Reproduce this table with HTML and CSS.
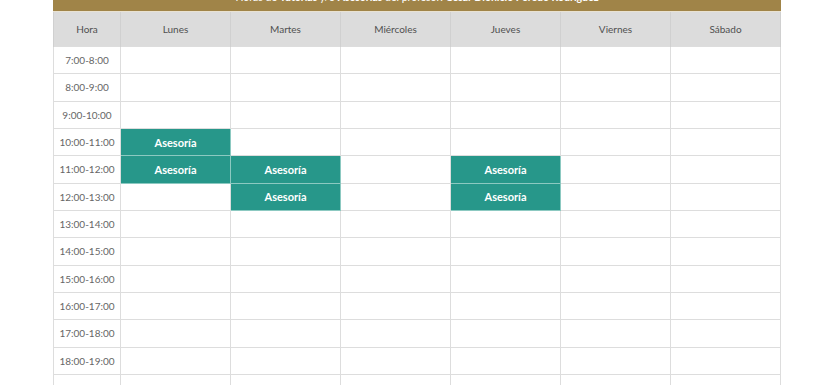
FILE: index.html
```html
<!DOCTYPE html>
<html lang="es">
<head>
<meta charset="utf-8">
<link rel="stylesheet" href="styles.css">
</head>
<body>
<div class="wrap">
  <div class="title">Horas de <b>Tutorías</b> y/o <b>Asesorías</b> del profesor: <b>César Dionicio Peredo Rodríguez</b></div>
  <table class="sched">
    <colgroup><col class="c-hora"><col><col><col><col><col><col></colgroup>
    <thead>
      <tr><th>Hora</th><th>Lunes</th><th>Martes</th><th>Miércoles</th><th>Jueves</th><th>Viernes</th><th>Sábado</th></tr>
    </thead>
    <tbody>
      <tr><td class="t">7:00-8:00</td><td></td><td></td><td></td><td></td><td></td><td></td></tr>
      <tr><td class="t">8:00-9:00</td><td></td><td></td><td></td><td></td><td></td><td></td></tr>
      <tr><td class="t">9:00-10:00</td><td></td><td></td><td></td><td></td><td></td><td></td></tr>
      <tr><td class="t">10:00-11:00</td><td class="on">Asesoría</td><td></td><td></td><td></td><td></td><td></td></tr>
      <tr><td class="t">11:00-12:00</td><td class="on">Asesoría</td><td class="on">Asesoría</td><td></td><td class="on">Asesoría</td><td></td><td></td></tr>
      <tr><td class="t">12:00-13:00</td><td></td><td class="on">Asesoría</td><td></td><td class="on">Asesoría</td><td></td><td></td></tr>
      <tr><td class="t">13:00-14:00</td><td></td><td></td><td></td><td></td><td></td><td></td></tr>
      <tr><td class="t">14:00-15:00</td><td></td><td></td><td></td><td></td><td></td><td></td></tr>
      <tr><td class="t">15:00-16:00</td><td></td><td></td><td></td><td></td><td></td><td></td></tr>
      <tr><td class="t">16:00-17:00</td><td></td><td></td><td></td><td></td><td></td><td></td></tr>
      <tr><td class="t">17:00-18:00</td><td></td><td></td><td></td><td></td><td></td><td></td></tr>
      <tr><td class="t">18:00-19:00</td><td></td><td></td><td></td><td></td><td></td><td></td></tr>
      <tr><td class="t">19:00-20:00</td><td></td><td></td><td></td><td></td><td></td><td></td></tr>
    </tbody>
  </table>
</div>
</body>
</html>
```
FILE: styles.css
```css
html, body {
  margin: 0;
  padding: 0;
  background: #fff;
}
body {
  font-family: Lato, "Open Sans", sans-serif;
  overflow: hidden;
}
.wrap {
  margin-left: 53px;
  width: 728px;
}
.title {
  background: #a08448;
  color: #fff;
  font-size: 10.5px;
  line-height: 14px;
  text-align: center;
  padding: 6px 0 7px;
  margin-top: -16px;
  border-bottom: 1px solid #e9e2d2;
}
.title b {
  font-weight: 700;
}
.sched {
  border-collapse: collapse;
  width: 728px;
  table-layout: fixed;
}
.c-hora {
  width: 67px;
}
.sched th {
  background: #dcdcdc;
  color: #505050;
  font-weight: 400;
  font-size: 10px;
  height: 34px;
  padding: 0;
  border: 1px solid #d0d0d0;
  border-top: none;
  border-bottom: none;
}
.sched td {
  height: 26.33px;
  padding: 0;
  border: 1px solid #dddddd;
  text-align: center;
  font-size: 10px;
  color: #666;
}
.sched td.on {
  background: #27978a;
  color: #fff;
  font-weight: 700;
  font-size: 11px;
  border-color: #8cc9c1;
}
```
